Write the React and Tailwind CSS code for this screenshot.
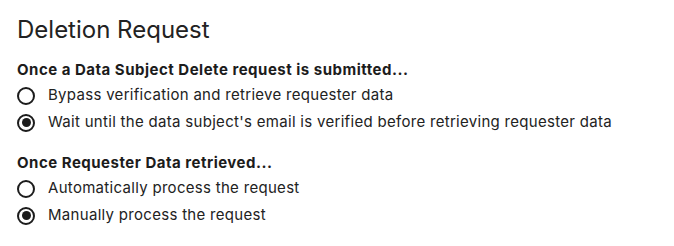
import { useState } from "react";

function Radio({ checked, label, onSelect }) {
  return (
    <label className="flex h-[27px] cursor-pointer items-center gap-[13px]" onClick={onSelect}>
      <span className="flex h-[18px] w-[18px] shrink-0 items-center justify-center rounded-full border-2 border-[#1c1c1c]">
        {checked && <span className="h-[9px] w-[9px] rounded-full bg-[#1c1c1c]" />}
      </span>
      <span className="text-[15px] tracking-[0.3px] text-[#222]">{label}</span>
    </label>
  );
}

function Group({ title, options, value, onChange }) {
  return (
    <div className="flex flex-col">
      <h4 className="mb-[2px] text-[15px] font-bold leading-5 tracking-[0.5px] text-[#1c1c1c]">{title}</h4>
      {options.map((opt, i) => (
        <Radio key={opt} label={opt} checked={value === i} onSelect={() => onChange(i)} />
      ))}
    </div>
  );
}

export default function App() {
  const [verify, setVerify] = useState(1);
  const [process, setProcess] = useState(1);

  return (
    <section className="bg-white px-[17px] pt-[14px] font-['Inter',sans-serif]">
      <h2 className="mb-[14px] text-[24px] leading-8 text-[#222]">Deletion Request</h2>
      <div className="flex flex-col gap-[17px]">
        <Group
          title="Once a Data Subject Delete request is submitted..."
          options={[
            "Bypass verification and retrieve requester data",
            "Wait until the data subject's email is verified before retrieving requester data",
          ]}
          value={verify}
          onChange={setVerify}
        />
        <Group
          title="Once Requester Data retrieved..."
          options={["Automatically process the request", "Manually process the request"]}
          value={process}
          onChange={setProcess}
        />
      </div>
    </section>
  );
}
